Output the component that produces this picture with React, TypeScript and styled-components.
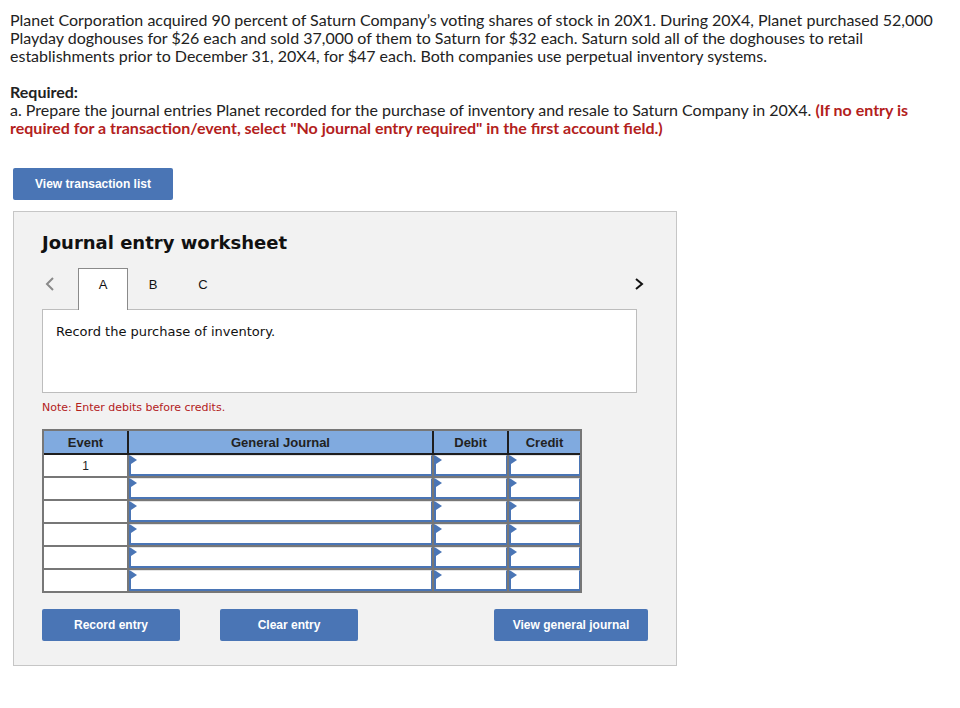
import React from "react";
import styled, { createGlobalStyle } from "styled-components";

const GlobalStyle = createGlobalStyle`
  body {
    margin: 0;
    background: #ffffff;
    font-family: "Lato", "Liberation Sans", sans-serif;
    color: #222;
  }
`;

const Page = styled.div`
  padding: 11px 0 0 10px;
  width: 935px;
`;

const Paragraph = styled.p`
  margin: 0 0 18px 0;
  font-size: 16px;
  line-height: 18px;
  color: #222;
`;

const RedText = styled.span`
  color: #b3211c;
  font-weight: 700;
`;

const Heading = styled.div`
  font-size: 16px;
  line-height: 18px;
  font-weight: 700;
`;

const BlueButton = styled.button<{ $width: number }>`
  width: ${(p) => p.$width}px;
  height: 32px;
  background: #4a75b5;
  border: none;
  border-radius: 2px;
  color: #fff;
  font-family: "Liberation Sans", Arial, sans-serif;
  font-weight: 700;
  font-size: 12px;
  letter-spacing: 0;
  padding: 0;
  cursor: pointer;
`;

const TopButtonRow = styled.div`
  margin: 31px 0 11px 3px;
`;

const Panel = styled.div`
  margin-left: 3px;
  width: 664px;
  background: #f2f2f2;
  border: 1px solid #c6c6c6;
  padding: 20px 0 24px 28px;
  box-sizing: border-box;
`;

const Title = styled.div`
  font-family: "DejaVu Sans", Verdana, sans-serif;
  font-weight: 700;
  font-size: 18px;
  line-height: 22px;
  color: #111;
`;

const TabBar = styled.div`
  margin-top: 14px;
  width: 604px;
  display: flex;
  align-items: stretch;
  height: 41px;
`;

const Arrow = styled.div<{ $dark?: boolean }>`
  width: 36px;
  display: flex;
  align-items: center;
  justify-content: ${(p) => (p.$dark ? "flex-end" : "flex-start")};
  padding-left: ${(p) => (p.$dark ? "0" : "2px")};
  box-sizing: border-box;
  margin-top: -10px;
`;

const Tab = styled.div<{ $active?: boolean }>`
  width: 50px;
  box-sizing: border-box;
  display: flex;
  align-items: center;
  justify-content: center;
  font-family: "Liberation Sans", Arial, sans-serif;
  font-size: 13px;
  color: #111;
  padding-bottom: 10px;
  background: ${(p) => (p.$active ? "#fff" : "transparent")};
  border: 1px solid ${(p) => (p.$active ? "#8a8a8a" : "transparent")};
  border-bottom: none;
  position: relative;
  z-index: 1;
  margin-bottom: -1px;
`;

const Spacer = styled.div`
  flex: 1;
`;

const PromptBox = styled.div`
  width: 595px;
  height: 84px;
  box-sizing: border-box;
  background: #fff;
  border: 1px solid #bdbdbd;
  padding: 13px 13px;
  font-family: "DejaVu Sans", Verdana, sans-serif;
  font-size: 13px;
  line-height: 17px;
  color: #111;
`;

const Note = styled.div`
  margin-top: 8px;
  font-family: "DejaVu Sans", Verdana, sans-serif;
  font-size: 11px;
  line-height: 14px;
  color: #b3211c;
`;

const Table = styled.div`
  margin-top: 14px;
  width: 540px;
  border: 2px solid #777;
  box-sizing: border-box;
`;

const Row = styled.div<{ $header?: boolean; $last?: boolean }>`
  display: grid;
  grid-template-columns: 83px 305px 75px 73px;
  height: ${(p) => (p.$header ? "22px" : "21px")};
  border-bottom: ${(p) =>
    p.$last ? "none" : p.$header ? "2px solid #1e1e1e" : "2px solid #777"};
`;

const HeadCell = styled.div<{ $first?: boolean }>`
  background: #80aadf;
  border-left: ${(p) => (p.$first ? "none" : "2px solid #1e1e1e")};
  display: flex;
  align-items: center;
  justify-content: center;
  font-family: "Liberation Sans", Arial, sans-serif;
  font-weight: 700;
  font-size: 13px;
  color: #222;
`;

const EventCell = styled.div`
  background: #fff;
  display: flex;
  align-items: center;
  justify-content: center;
  font-family: "Liberation Sans", Arial, sans-serif;
  font-size: 12px;
  color: #222;
`;

const InputCell = styled.div`
  border-left: 2px solid #777;
  background: #fff;
  display: flex;
`;

const InputBox = styled.div`
  flex: 1;
  position: relative;
  background: #fff;
  border-left: 2px solid #4a75b5;
  border-bottom: 2px solid #4a75b5;
  border-right: 1px solid #4a75b5;
  border-top: 1px solid #e4e4e4;
`;

const Marker = styled.span`
  position: absolute;
  left: 0;
  top: 0;
  width: 0;
  height: 0;
  border-top: 4px solid transparent;
  border-bottom: 4px solid transparent;
  border-left: 6px solid #4a75b5;
`;

const ButtonRow = styled.div`
  margin-top: 16px;
  width: 606px;
  display: flex;
  justify-content: space-between;
`;

const ButtonGroup = styled.div`
  display: flex;
  gap: 40px;
`;

const LeftChevron = () => (
  <svg width="12" height="16" viewBox="0 0 12 16">
    <path d="M9 2 L3 8 L9 14" fill="none" stroke="#8a8a8a" strokeWidth="2" />
  </svg>
);

const RightChevron = () => (
  <svg width="10" height="14" viewBox="0 0 10 14" style={{ marginRight: 2 }}>
    <path d="M2 2 L8 7 L2 12" fill="none" stroke="#111" strokeWidth="2" />
  </svg>
);

const rows = [1, 2, 3, 4, 5, 6];

const App: React.FC = () => {
  return (
    <>
      <GlobalStyle />
      <Page>
        <Paragraph>
          Planet Corporation acquired 90 percent of Saturn Company’s voting shares of stock in
          20X1. During 20X4, Planet purchased 52,000 Playday doghouses for $26 each and sold
          37,000 of them to Saturn for $32 each. Saturn sold all of the doghouses to retail
          establishments prior to December 31, 20X4, for $47 each. Both companies use perpetual
          inventory systems.
        </Paragraph>
        <Heading>Required:</Heading>
        <Paragraph style={{ marginBottom: 0 }}>
          a. Prepare the journal entries Planet recorded for the purchase of inventory and resale
          to Saturn Company in 20X4.{" "}
          <RedText>
            (If no entry is required for a transaction/event, select "No journal entry required"
            in the first account field.)
          </RedText>
        </Paragraph>

        <TopButtonRow>
          <BlueButton $width={160}>View transaction list</BlueButton>
        </TopButtonRow>

        <Panel>
          <Title>Journal entry worksheet</Title>
          <TabBar>
            <Arrow>
              <LeftChevron />
            </Arrow>
            <Tab $active>A</Tab>
            <Tab>B</Tab>
            <Tab>C</Tab>
            <Spacer />
            <Arrow $dark>
              <RightChevron />
            </Arrow>
          </TabBar>
          <PromptBox>Record the purchase of inventory.</PromptBox>
          <Note>Note: Enter debits before credits.</Note>

          <Table>
            <Row $header>
              <HeadCell $first>Event</HeadCell>
              <HeadCell>General Journal</HeadCell>
              <HeadCell>Debit</HeadCell>
              <HeadCell>Credit</HeadCell>
            </Row>
            {rows.map((r) => (
              <Row key={r} $last={r === rows.length}>
                <EventCell>{r === 1 ? "1" : ""}</EventCell>
                {[0, 1, 2].map((c) => (
                  <InputCell key={c}>
                    <InputBox>
                      <Marker />
                    </InputBox>
                  </InputCell>
                ))}
              </Row>
            ))}
          </Table>

          <ButtonRow>
            <ButtonGroup>
              <BlueButton $width={138}>Record entry</BlueButton>
              <BlueButton $width={138}>Clear entry</BlueButton>
            </ButtonGroup>
            <BlueButton $width={154}>View general journal</BlueButton>
          </ButtonRow>
        </Panel>
      </Page>
    </>
  );
};

export default App;
